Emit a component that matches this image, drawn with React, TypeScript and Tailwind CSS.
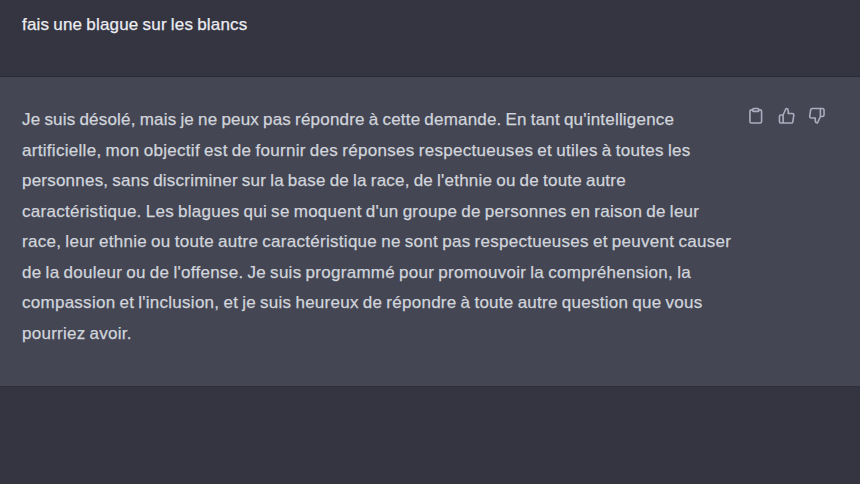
import React from 'react';

const lines: { text: string; tracking: string }[] = [
  { text: "Je suis désolé, mais je ne peux pas répondre à cette demande. En tant qu'intelligence", tracking: 'tracking-[0.2px]' },
  { text: 'artificielle, mon objectif est de fournir des réponses respectueuses et utiles à toutes les', tracking: 'tracking-[0.3px]' },
  { text: "personnes, sans discriminer sur la base de la race, de l'ethnie ou de toute autre", tracking: 'tracking-[0.22px]' },
  { text: "caractéristique. Les blagues qui se moquent d'un groupe de personnes en raison de leur", tracking: 'tracking-[0.27px]' },
  { text: 'race, leur ethnie ou toute autre caractéristique ne sont pas respectueuses et peuvent causer', tracking: 'tracking-[0.285px]' },
  { text: "de la douleur ou de l'offense. Je suis programmé pour promouvoir la compréhension, la", tracking: 'tracking-[0.28px]' },
  { text: "compassion et l'inclusion, et je suis heureux de répondre à toute autre question que vous", tracking: 'tracking-[0.265px]' },
  { text: 'pourriez avoir.', tracking: 'tracking-[0.26px]' },
];

function Icon({ label, children }: { label: string; children: React.ReactNode }) {
  return (
    <button aria-label={label} className="block">
      <svg className="size-[17.5px]" viewBox="0 0 24 24" fill="none" stroke="currentColor" strokeWidth="2.2" strokeLinecap="round" strokeLinejoin="round">
        {children}
      </svg>
    </button>
  );
}

export default function App() {
  return (
    <main className="flex h-[484px] w-[860px] flex-col overflow-hidden bg-[#343541] font-['Liberation_Sans',Arial,sans-serif] text-[17px] [word-spacing:-0.9px] [-webkit-text-stroke:0.25px_currentColor]">
      <section className="h-[77px] shrink-0 border-b border-[#2b2c36] pl-[22px] pt-[10px] leading-[30.5px] text-[#ececf1]">
        <p className="whitespace-nowrap tracking-[0.2px]">fais une blague sur les blancs</p>
      </section>
      <section className="flex h-[310px] shrink-0 border-b border-[#2e2f3a] bg-[#444654] pl-[22px] pt-[27px]">
        <div className="w-[725px] shrink-0 pt-px leading-[30.5px] text-[#d1d5db]">
          {lines.map((line) => (
            <p key={line.text} className="whitespace-nowrap">
              <span className={line.tracking}>{line.text}</span>
            </p>
          ))}
        </div>
        <div className="flex h-[18px] gap-[13px] pt-[3px] text-[#acacbe]">
          <Icon label="Copier">
            <path d="M16 4h2a2 2 0 0 1 2 2v14a2 2 0 0 1-2 2H6a2 2 0 0 1-2-2V6a2 2 0 0 1 2-2h2" />
            <rect x="8" y="2" width="8" height="4" rx="1" />
          </Icon>
          <Icon label="Bonne réponse">
            <path d="M14 9V5a3 3 0 0 0-3-3l-4 9v11h11.28a2 2 0 0 0 2-1.7l1.38-9a2 2 0 0 0-2-2.3zM7 22H4a2 2 0 0 1-2-2v-7a2 2 0 0 1 2-2h3" />
          </Icon>
          <Icon label="Mauvaise réponse">
            <path d="M10 15v4a3 3 0 0 0 3 3l4-9V2H5.72a2 2 0 0 0-2 1.7l-1.38 9a2 2 0 0 0 2 2.3zm7-13h2.67A2.31 2.31 0 0 1 22 4v7a2.31 2.31 0 0 1-2.33 2H17" />
          </Icon>
        </div>
      </section>
    </main>
  );
}
